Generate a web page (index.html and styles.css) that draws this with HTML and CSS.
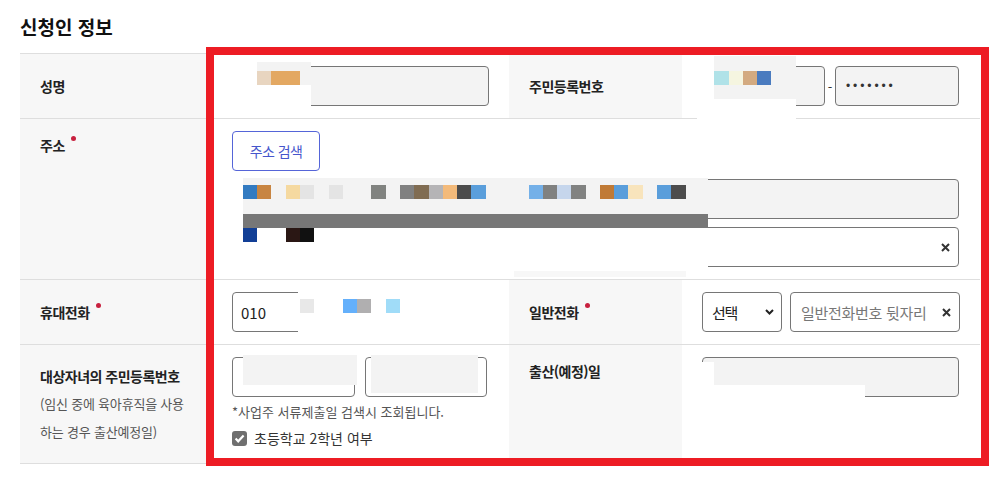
FILE: index.html
```html
<!DOCTYPE html>
<html lang="ko">
<head>
<meta charset="utf-8">
<title>신청인 정보</title>
<link rel="stylesheet" href="styles.css">
</head>
<body>
<div class="page">
  <h2 class="title">신청인 정보</h2>
  <div class="form">
    <!-- row 1 -->
    <div class="cell lbl mid"><span>성명</span></div>
    <div class="cell val">
      <div class="input ro name-input"></div>
    </div>
    <div class="cell lbl mid"><span>주민등록번호</span></div>
    <div class="cell val rrn">
      <div class="input ro rrn1"></div>
      <span class="dash">-</span>
      <div class="input ro rrn2"><span class="dots">•••••••</span></div>
    </div>

    <!-- row 2 -->
    <div class="cell lbl top"><span>주소<i class="req"></i></span></div>
    <div class="cell addr">
      <div class="btn">주소 검색</div>
      <div class="input ro addr1"></div>
      <div class="input addr2">
        <svg class="clear" width="9" height="9" viewBox="0 0 9 9"><path d="M1 1L8 8M8 1L1 8" stroke="#333" stroke-width="2" fill="none"/></svg>
      </div>
    </div>

    <!-- row 3 -->
    <div class="cell lbl mid"><span>휴대전화<i class="req"></i></span></div>
    <div class="cell val phone">
      <div class="input p1"><span class="num">010</span></div>
      <span class="dash">-</span>
      <div class="input p2"></div>
      <span class="dash">-</span>
      <div class="input p3"></div>
    </div>
    <div class="cell lbl mid"><span>일반전화<i class="req"></i></span></div>
    <div class="cell val tel">
      <div class="input select">
        <span class="ko">선택</span>
        <svg width="9" height="6" viewBox="0 0 9 6"><path d="M1 1L4.5 4.5L8 1" stroke="#222" stroke-width="2" fill="none"/></svg>
      </div>
      <div class="input tel-input">
        <span class="ph">일반전화번호 뒷자리</span>
        <svg class="clear" width="9" height="9" viewBox="0 0 9 9"><path d="M1 1L8 8M8 1L1 8" stroke="#333" stroke-width="2" fill="none"/></svg>
      </div>
    </div>

    <!-- row 4 -->
    <div class="cell lbl top child-lbl">
      <div>대상자녀의 주민등록번호</div>
      <div class="sub">(임신 중에 육아휴직을 사용<br>하는 경우 출산예정일)</div>
    </div>
    <div class="cell child">
      <div class="child-inputs">
        <div class="input c1"></div>
        <div class="input c2"></div>
      </div>
      <p class="hint">*사업주 서류제출일 검색시 조회됩니다.</p>
      <label class="check">
        <span class="box"><svg width="15" height="15" viewBox="0 0 15 15"><path d="M3.6 7.6L6.2 10.3L11.6 4.6" stroke="#fff" stroke-width="2.2" fill="none"/></svg></span>
        <span>초등학교 2학년 여부</span>
      </label>
    </div>
    <div class="cell lbl top"><span>출산(예정)일</span></div>
    <div class="cell date">
      <div class="input ro"></div>
    </div>
  </div>

  <svg class="overlay" width="1006" height="485" viewBox="0 0 1006 485">
    <!-- name -->
    <rect x="257" y="62" width="54" height="23" fill="#f3f3f3"/>
    <rect x="257" y="71" width="14" height="14" fill="#e8d5c0"/>
    <rect x="271" y="71" width="29" height="14" fill="#e3a862"/>
    <rect x="257" y="85" width="54" height="22" fill="#fff"/>
    <!-- rrn -->
    <rect x="697" y="56" width="17" height="64" fill="#fff"/>
    <rect x="714" y="56" width="82" height="43" fill="#f3f3f3"/>
    <rect x="714" y="71" width="15" height="14" fill="#b0e2e8"/>
    <rect x="729" y="71" width="14" height="14" fill="#f5f5e0"/>
    <rect x="743" y="71" width="14" height="14" fill="#d3aa80"/>
    <rect x="757" y="71" width="14" height="14" fill="#4a7bbf"/>
    <rect x="697" y="99" width="99" height="21" fill="#fff"/>
    <!-- address -->
    <rect x="228" y="176" width="15" height="94" fill="#fff"/>
    <rect x="243" y="178" width="465" height="36" fill="#f3f3f3"/>
    <rect x="243" y="185" width="14" height="14" fill="#337bc1"/>
    <rect x="257" y="185" width="14" height="14" fill="#c88542"/>
    <rect x="286" y="185" width="14" height="14" fill="#f5d9a0"/>
    <rect x="300" y="185" width="14" height="14" fill="#e4e4e4"/>
    <rect x="329" y="185" width="14" height="14" fill="#e4e4e4"/>
    <rect x="371" y="185" width="15" height="14" fill="#818380"/>
    <rect x="400" y="185" width="14" height="14" fill="#808080"/>
    <rect x="414" y="185" width="15" height="14" fill="#806c52"/>
    <rect x="429" y="185" width="14" height="14" fill="#b5b4b6"/>
    <rect x="443" y="185" width="14" height="14" fill="#f3ba7a"/>
    <rect x="457" y="185" width="14" height="14" fill="#4c4c4c"/>
    <rect x="471" y="185" width="15" height="14" fill="#5a9edb"/>
    <rect x="529" y="185" width="14" height="14" fill="#74b0e8"/>
    <rect x="543" y="185" width="14" height="14" fill="#808180"/>
    <rect x="557" y="185" width="14" height="14" fill="#c6d6ec"/>
    <rect x="571" y="185" width="15" height="14" fill="#818281"/>
    <rect x="600" y="185" width="14" height="14" fill="#c07a36"/>
    <rect x="614" y="185" width="14" height="14" fill="#5a9edb"/>
    <rect x="628" y="185" width="15" height="14" fill="#f8e4bc"/>
    <rect x="657" y="185" width="14" height="14" fill="#5a9edb"/>
    <rect x="671" y="185" width="15" height="14" fill="#4c4c4c"/>
    <rect x="243" y="214" width="465" height="14" fill="#777"/>
    <rect x="243" y="228" width="465" height="41" fill="#fff"/>
    <rect x="243" y="228" width="14" height="14" fill="#123f96"/>
    <rect x="286" y="228" width="14" height="14" fill="#2a1714"/>
    <rect x="300" y="228" width="14" height="14" fill="#111"/>
    <rect x="514" y="271" width="172" height="6" fill="#f7f7f7"/>
    <!-- phone -->
    <rect x="298" y="283" width="208" height="57" fill="#fff"/>
    <rect x="300" y="299" width="14" height="14" fill="#e8e8e8"/>
    <rect x="343" y="299" width="14" height="14" fill="#64b0fb"/>
    <rect x="357" y="299" width="14" height="14" fill="#b0afb0"/>
    <rect x="386" y="299" width="14" height="14" fill="#a0dcf8"/>
    <!-- child rrn -->
    <rect x="243" y="355" width="114" height="30" fill="#f3f3f3"/>
    <rect x="371" y="355" width="107" height="38" fill="#f3f3f3"/>
    <!-- date -->
    <rect x="700" y="362" width="14" height="37" fill="#fff"/>
    <rect x="714" y="385" width="151" height="14" fill="#fff"/>
    <!-- highlight frame -->
    <rect x="210" y="51" width="775" height="411" fill="none" stroke="#ed1c24" stroke-width="8"/>
  </svg>
</div>
</body>
</html>
```

FILE: styles.css
```css
* {
  box-sizing: border-box;
}

body {
  margin: 0;
  background: #fff;
  font-family: "Noto Sans CJK KR", "Noto Sans", sans-serif;
  color: #222;
}

.page {
  position: relative;
  width: 1006px;
  height: 485px;
  padding: 13px 0 0 20px;
}

.title {
  margin: 0 0 12px;
  font-size: 19px;
  font-weight: 700;
  line-height: 28px;
  letter-spacing: 0;
  color: #111;
}

.form {
  display: grid;
  width: 960px;
  grid-template-columns: 190px 299px 173px 298px;
  grid-template-rows: 65px 161px 65px 119px;
  border-top: 1px solid #dedede;
}

.cell {
  border-bottom: 1px solid #dedede;
}

.lbl {
  background: #f7f7f7;
  padding: 0 10px 0 20px;
  font-size: 14px;
  font-weight: 700;
  letter-spacing: -0.5px;
  line-height: 28px;
  color: #222;
}

.lbl.mid {
  display: flex;
  align-items: center;
}

.lbl.top {
  padding-top: 12px;
}

.lbl.child-lbl {
  padding-top: 17px;
}

.lbl .sub {
  font-size: 13px;
  font-weight: 400;
  color: #555;
  letter-spacing: -0.2px;
  white-space: nowrap;
}

.req {
  display: inline-block;
  width: 5px;
  height: 5px;
  border-radius: 50%;
  background: #c8213f;
  margin-left: 6px;
  vertical-align: 10px;
}

.val {
  display: flex;
  align-items: center;
}

.input {
  height: 40px;
  border: 1px solid #767676;
  border-radius: 4px;
  background: #fff;
  display: flex;
  align-items: center;
  padding: 0 10px;
  font-size: 15px;
  color: #222;
}

.ro {
  background: #f3f3f3;
}

.name-input {
  margin-left: 47px;
  width: 232px;
}

.rrn {
  padding-left: 20px;
}

.rrn1 {
  width: 123px;
}

.dash {
  width: 10px;
  text-align: center;
  font-size: 13px;
  color: #333;
}

.rrn2 {
  width: 124px;
  padding-left: 10px;
}

.dots {
  font-family: "Liberation Sans", sans-serif;
  font-size: 12px;
  letter-spacing: 2.9px;
  color: #333;
}

.addr {
  grid-column: 2 / 5;
  padding: 12px 21px 0 22px;
}

.btn {
  display: flex;
  align-items: center;
  justify-content: center;
  width: 88px;
  height: 40px;
  border: 1px solid #5565d8;
  border-radius: 4px;
  background: #fff;
  color: #4656cc;
  font-size: 14px;
  letter-spacing: -0.6px;
}

.addr .input {
  margin-top: 8px;
}

.addr2 {
  justify-content: flex-end;
  padding-right: 8px;
}

.phone {
  padding-left: 22px;
}

.p1 {
  width: 78px;
  padding-left: 8px;
}

.p2,
.p3 {
  width: 78px;
}

.num {
  font-size: 15px;
}

.tel {
  padding-left: 20px;
  gap: 8px;
}

.ko {
  letter-spacing: -1.3px;
}

.select {
  width: 80px;
  justify-content: space-between;
  padding: 0 7px 0 9px;
}

.tel-input {
  width: 170px;
  justify-content: space-between;
  padding: 0 8px 0 10px;
}

.ph {
  color: #777;
  letter-spacing: -0.3px;
}

.child {
  padding: 12px 22px 0;
}

.child-inputs {
  display: flex;
  gap: 10px;
}

.c1 {
  width: 124px;
}

.c2 {
  width: 123px;
}

.hint {
  margin: 5px 0 0;
  font-size: 13px;
  line-height: 20px;
  letter-spacing: 0;
  color: #555;
}

.check {
  display: flex;
  align-items: center;
  gap: 7px;
  margin-top: 6px;
  height: 20px;
  font-size: 14px;
  color: #333;
}

.box {
  display: flex;
  width: 15px;
  height: 15px;
  border-radius: 3px;
  background: #6f6f6f;
}

.date {
  padding: 12px 21px 0 20px;
}

.overlay {
  position: absolute;
  left: 0;
  top: 0;
  pointer-events: none;
}
```
